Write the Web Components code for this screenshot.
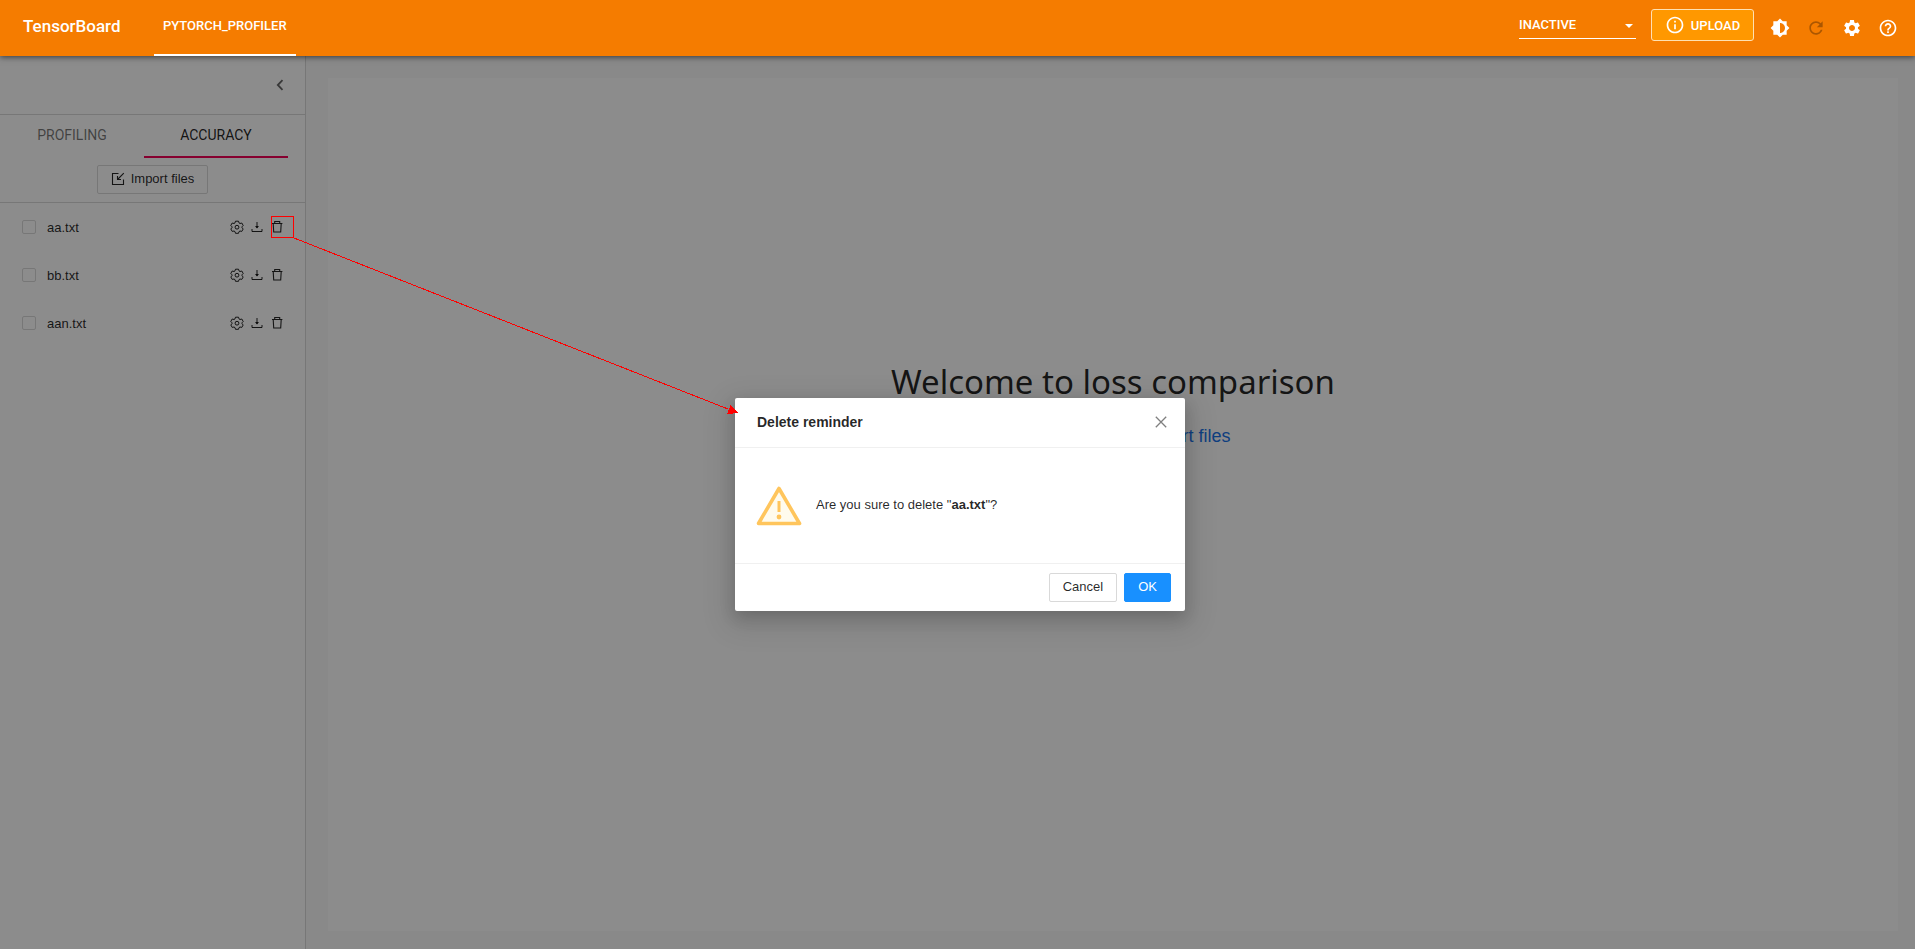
<!DOCTYPE html>
<html lang="en">
<head>
<meta charset="utf-8">
<title>TensorBoard</title>
<style>
html,body{margin:0;height:100%}
body{font-family:"Liberation Sans",Arial,sans-serif;font-size:13px;color:rgba(0,0,0,.85);overflow:hidden}
</style>
</head>
<body>
<tb-app></tb-app>
<script>
const ICONS = {
  info:['0 0 24 24','<path d="M11 7h2v2h-2zm0 4h2v6h-2zm1-9C6.480 2 2 6.480 2 12s4.480 10 10 10 10-4.480 10-10S17.520 2 12 2zm0 18c-4.410 0-8-3.590-8-8s3.590-8 8-8 8 3.590 8 8-3.590 8-8 8z"/>'],
  bright:['0 0 24 24','<path d="M20 8.690V4h-4.690L12 .69 8.690 4H4v4.690L.69 12 4 15.310V20h4.690L12 23.310 15.310 20H20v-4.690L23.310 12 20 8.690zM12 18V6c3.310 0 6 2.690 6 6s-2.690 6-6 6z"/>'],
  refresh:['0 0 24 24','<path d="M17.650 6.350C16.200 4.900 14.210 4 12 4c-4.420 0-7.990 3.580-7.990 8s3.570 8 7.990 8c3.730 0 6.840-2.550 7.730-6h-2.080c-.82 2.330-3.040 4-5.650 4-3.310 0-6-2.690-6-6s2.690-6 6-6c1.660 0 3.140.69 4.220 1.780L13 11h7V4l-2.350 2.350z"/>'],
  gear:['0 0 24 24','<path d="M19.140 12.940c.04-.3.06-.61.06-.94 0-.32-.02-.64-.07-.94l2.030-1.580c.18-.14.23-.41.12-.61l-1.920-3.320c-.12-.22-.37-.29-.59-.22l-2.390.96c-.5-.38-1.030-.7-1.620-.94l-.36-2.540c-.04-.24-.24-.41-.48-.41h-3.840c-.24 0-.43.17-.47.41l-.36 2.540c-.59.24-1.130.57-1.620.94l-2.390-.96c-.22-.08-.47 0-.59.22L2.740 8.870c-.12.21-.08.47.12.61l2.030 1.580c-.05.3-.09.63-.09.94s.02.64.07.94l-2.030 1.580c-.18.14-.23.41-.12.61l1.920 3.320c.12.22.37.29.59.22l2.390-.96c.5.38 1.030.7 1.620.94l.36 2.540c.05.24.24.41.48.41h3.840c.24 0 .44-.17.47-.41l.36-2.540c.59-.24 1.130-.56 1.620-.94l2.390.96c.22.08.47 0 .59-.22l1.920-3.320c.12-.22.07-.47-.12-.61l-2.010-1.580zM12 15.600c-1.980 0-3.600-1.620-3.600-3.600s1.620-3.600 3.600-3.600 3.600 1.620 3.600 3.600-1.620 3.600-3.600 3.600z"/>'],
  help:['0 0 24 24','<path d="M11 18h2v-2h-2v2zm1-16C6.480 2 2 6.480 2 12s4.480 10 10 10 10-4.480 10-10S17.520 2 12 2zm0 18c-4.410 0-8-3.590-8-8s3.590-8 8-8 8 3.590 8 8-3.590 8-8 8zm0-14c-2.210 0-4 1.790-4 4h2c0-1.100.9-2 2-2s2 .9 2 2c0 2-3 1.750-3 5h2c0-2.250 3-2.500 3-5 0-2.210-1.790-4-4-4z"/>'],
  caret:['0 0 10 5','<path d="M0 0h10L5 5z"/>'],
  left:['0 0 8 12','<path d="M6.500 1.200 1.800 6l4.700 4.800" fill="none" stroke="currentColor" stroke-width="1.800"/>'],
  import:['0 0 14 14','<path d="M7.500 1.500h-6v11h11V7.500M12.800 1.200 7 7M6.500 4v3.500H10" fill="none" stroke="currentColor" stroke-width="1.100"/>'],
  setting:['0 0 14 14','<path d="M5.500 1.200h3l.5 1.700 1 .6 1.800-.5 1.400 2.500-1.200 1.300v.9l1.200 1.300-1.400 2.400-1.800-.4-1 .6-.5 1.700h-3L5 11.600 4 11l-1.800.4L.8 9 2 7.700v-.9L.8 5.500 2.200 3l1.800.5 1-.6z" fill="none" stroke="currentColor"/><circle cx="7" cy="7.200" r="1.900" fill="none" stroke="currentColor"/>'],
  download:['0 0 14 14','<path d="M7 2v6M2 9v2.500h10V9" fill="none" stroke="currentColor"/><path d="M5 6h4L7 8.600z"/>'],
  trash:['0 0 14 14','<path d="M2 3.500h10.400M4.700 3.500v-2h5v2M3.200 3.500l.5 8.500h7l.5-8.500" fill="none" stroke="currentColor" stroke-width="1.100"/>'],
  close:['0 0 12 12','<path d="M.8.8l10.400 10.400M11.200.8.8 11.200" fill="none" stroke="currentColor" stroke-width="1.300"/>'],
  warn:['0 0 46 40','<path d="M23 2.500 43.500 37.500h-41z" fill="#fffbed" stroke="#ffc55c" stroke-width="3.600" stroke-linejoin="round"/><path d="M21.500 15h3v11h-3z" fill="#ffc55c"/><circle cx="23" cy="31" r="2.400" fill="#ffc55c"/>']
};
function define(name, html, setup) {
  const t = document.createElement('template');
  t.innerHTML = html;
  customElements.define(name, class extends HTMLElement {
    connectedCallback() {
      if (this.shadowRoot) return;
      this.attachShadow({mode:'open'}).append(t.content.cloneNode(true));
      if (setup) setup(this, this.shadowRoot);
    }
  });
}
const RESET = '*{box-sizing:border-box}button{font:inherit;color:inherit;background:none;border:0;padding:0;margin:0;cursor:pointer}';

define('tb-icon', `<style>:host{display:inline-flex;width:14px;height:14px;flex:none}svg{width:100%;height:100%;fill:currentColor;display:block}</style><svg aria-hidden="true"></svg>`, (el, root) => {
  const [box, body] = ICONS[el.getAttribute('name')];
  const svg = root.querySelector('svg');
  svg.setAttribute('viewBox', box);
  svg.innerHTML = body;
});

define('tb-header', `<style>${RESET}
:host{display:flex;align-items:stretch;height:56px;background:#f57c00;color:#fff;padding:0 17px 0 23px;box-shadow:0 1px 6px rgba(0,0,0,.6);box-sizing:border-box;position:relative;z-index:2;font-family:Roboto,sans-serif}
h1{margin:0;font-size:17px;font-weight:500;line-height:52px;width:131px}
nav{flex:1;display:flex}
nav a{color:#fff;text-decoration:none;font-size:13px;font-weight:500;line-height:51px;padding:0 9px;border-bottom:2px solid #fff}
.tools{display:flex;align-items:center;gap:16px}
.run{position:relative;width:117px;height:28px;margin-bottom:7px;border-bottom:1px solid #fff}
select{appearance:none;display:block;width:100%;height:27px;border:0;background:none;color:#fff;font:500 13px Roboto,sans-serif;padding:0;margin:0}
.run tb-icon{position:absolute;right:3px;top:13px;width:8px;height:4px}
.upload{display:flex;align-items:center;justify-content:center;gap:6px;width:103px;height:32px;margin:0 0 6px -1px;border:1px solid #ffe0b2;border-radius:3px;background:#ff9800;font-size:13px;font-weight:500}
.upload tb-icon{width:20px;height:20px}
.ic tb-icon{width:20px;height:20px;display:block}
.ic[disabled]{color:rgba(0,0,0,.3)}
</style>
<h1>TensorBoard</h1>
<nav><a href="#profiler">PYTORCH_PROFILER</a></nav>
<div class="tools">
<div class="run"><select aria-label="Inactive dashboards"><option>INACTIVE</option></select><tb-icon name="caret"></tb-icon></div>
<button class="upload"><tb-icon name="info"></tb-icon>UPLOAD</button>
<button class="ic" aria-label="Theme"><tb-icon name="bright"></tb-icon></button>
<button class="ic" aria-label="Reload" disabled><tb-icon name="refresh"></tb-icon></button>
<button class="ic" aria-label="Settings"><tb-icon name="gear"></tb-icon></button>
<button class="ic" aria-label="Help"><tb-icon name="help"></tb-icon></button>
</div>`);

define('tb-button', `<style>${RESET}
:host{display:inline-block}
button{display:flex;align-items:center;gap:6px;height:29px;padding:0 13px 2px;border:1px solid #d9d9d9;border-radius:2px;background:#fff;line-height:20px}
:host([primary]) button{background:#1890ff;border-color:#1890ff;color:#fff}
</style><button><slot></slot></button>`);

define('tb-file', `<style>${RESET}
:host{display:block}
.row{display:flex;align-items:center;height:48px;padding:0 21px 0 22px}
label{display:flex;align-items:center;gap:11px;flex:1}
input{appearance:none;width:14px;height:14px;margin:0;border:1px solid #d9d9d9;border-radius:2px;background:#fff}
.acts{display:flex;gap:6px}
.acts tb-icon{display:block}
</style>
<div class="row"><label><input type="checkbox"><slot></slot></label>
<div class="acts"><button aria-label="Configure"><tb-icon name="setting"></tb-icon></button><button aria-label="Download"><tb-icon name="download"></tb-icon></button><button aria-label="Delete"><tb-icon name="trash"></tb-icon></button></div></div>`);

define('tb-sidebar', `<style>${RESET}
:host{display:flex;flex-direction:column;width:306px;flex:none;box-sizing:border-box;background:#fff;border-right:1px solid #d9d9d9}
.top{height:59px;border-bottom:1px solid #d9d9d9;display:flex;justify-content:flex-end;padding:0 21px 0 0}
.top button{height:58px;color:rgba(0,0,0,.6)}
.top tb-icon{display:block;width:8px;height:12px}
.tabs{display:flex;padding-right:17px}
.tabs button{flex:1;height:43px;font:400 14px Roboto,sans-serif;padding-bottom:2px;border-bottom:2px solid transparent;color:rgba(0,0,0,.54)}
.tabs .on{color:rgba(0,0,0,.87);border-color:#f50057}
.import{display:flex;justify-content:center;padding:7px 0 8px;border-bottom:1px solid #d9d9d9}
</style>
<div class="top"><button aria-label="Collapse"><tb-icon name="left"></tb-icon></button></div>
<div class="tabs" role="tablist"><button role="tab">PROFILING</button><button role="tab" class="on" aria-selected="true">ACCURACY</button></div>
<div class="import"><tb-button><tb-icon name="import"></tb-icon>Import files</tb-button></div>
<tb-file>aa.txt</tb-file><tb-file>bb.txt</tb-file><tb-file>aan.txt</tb-file>`);

define('tb-welcome', `<style>
:host{display:block;flex:1;box-sizing:border-box;background:#fafafa;padding:22px 17px 18px 22px}
.card{height:100%;background:#fff;display:flex;flex-direction:column;align-items:center;justify-content:center;box-sizing:border-box;padding-bottom:204px}
h2{margin:0;font:400 33px/48px "Noto Sans",sans-serif}
p{margin:18px 0 0;font-size:18px;line-height:24px}
a{color:#1a73e8;text-decoration:none}
</style>
<div class="card"><h2>Welcome to loss comparison</h2><p>Please select and <a href="#import">Import files</a></p></div>`);

define('tb-dialog', `<style>${RESET}
:host{position:absolute;inset:0;z-index:1;display:flex;align-items:center;justify-content:center;background:rgba(0,0,0,.45);padding:4px 0 0 5px;box-sizing:border-box}
section{width:450px;background:#fff;border-radius:2px;box-shadow:0 6px 16px rgba(0,0,0,.16),0 9px 28px 8px rgba(0,0,0,.1)}
header{display:flex;align-items:center;justify-content:space-between;height:50px;padding:0 18px 2px 22px;border-bottom:1px solid #f0f0f0}
h3{margin:0;font-size:14px;font-weight:700}
header button{color:rgba(0,0,0,.5)}
header tb-icon{width:12px;height:12px;display:block}
.body{display:flex;align-items:center;gap:14px;height:115px;padding:0 21px}
.body tb-icon{width:46px;height:40px}
p{margin:0;padding-bottom:2px;line-height:20px}
footer{display:flex;justify-content:flex-end;gap:7px;padding:9px 14px;border-top:1px solid #f0f0f0}
</style>
<section role="dialog" aria-modal="true" aria-labelledby="t">
<header><h3 id="t">Delete reminder</h3><button aria-label="Close"><tb-icon name="close"></tb-icon></button></header>
<div class="body"><tb-icon name="warn"></tb-icon><p>Are you sure to delete "<b>aa.txt</b>"?</p></div>
<footer><tb-button>Cancel</tb-button><tb-button primary>OK</tb-button></footer>
</section>`);

define('tb-callout', `<style>
:host{position:absolute;left:0;top:0;z-index:3;pointer-events:none}
svg{display:block}
</style>
<svg width="760" height="430" fill="none" stroke="#f00" shape-rendering="crispEdges" aria-hidden="true"><path d="M271.500 216.500h22v21h-22zM294 238 728 409"/><path d="M738 413 727 414 730.500 405z" fill="#f00" stroke="none"/></svg>`);

define('tb-app', `<style>
:host{display:flex;flex-direction:column;height:100vh;position:relative}
main{flex:1;display:flex;position:relative}
</style>
<tb-header></tb-header>
<main><tb-sidebar></tb-sidebar><tb-welcome></tb-welcome><tb-dialog></tb-dialog></main>
<tb-callout></tb-callout>`);
</script>
</body>
</html>
